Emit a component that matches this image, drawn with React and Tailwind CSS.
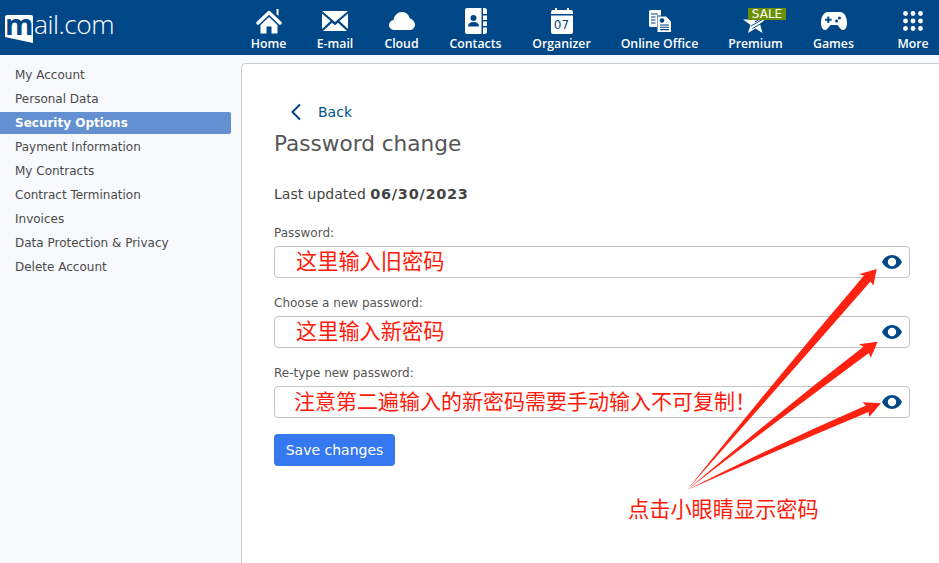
const BLUE = '#004788';

const HomeIcon = () => (
  <svg width="26" height="26" viewBox="0 0 26 26" fill="none">
    <path d="M2 15 13 4.500 24 15" stroke="#fff" strokeWidth="3.400" strokeLinecap="round" strokeLinejoin="round" />
    <path d="M20.500 1h2v7l-2-2z" fill="#fff" />
    <path fillRule="evenodd" d="M13 9l8.500 8v8.500h-6v-7h-5v7h-6V17z" fill="#fff" />
  </svg>
);

const MailIcon = () => (
  <svg width="26" height="20" viewBox="0 0 26 20">
    <path d="M0 0h26L13 11z" fill="#fff" />
    <path d="M0 2.500 8.500 10 0 18zM26 2.500 17.500 10 26 18z" fill="#fff" />
    <path d="M1 20l9-8.300 3 2.600 3-2.600 9 8.300z" fill="#fff" />
  </svg>
);

const CloudIcon = () => (
  <svg width="26" height="18" viewBox="0 0 26 18">
    <path d="M5.500 18C2.400 18 0 15.800 0 13c0-2.600 2-4.700 4.600-5C5.200 3.400 8.800 0 13 0c3.200 0 6 1.800 7.200 4.700 0 0 .3.900.4 1.700C23.700 7 26 9.700 26 12.700 26 15.800 23.600 18 20.500 18z" fill="#fff" />
  </svg>
);

const ContactsIcon = () => (
  <svg width="22" height="26" viewBox="0 0 22 26">
    <path d="M2 0h14.500v26H2a2 2 0 0 1-2-2V2a2 2 0 0 1 2-2z" fill="#fff" />
    <path d="M18 0h1.500A2.500 2.500 0 0 1 22 2.500V6h-4zM18 7.500h4V12h-4zM18 13.500h4V18h-4zM18 19.500h4v4a2.500 2.500 0 0 1-2.500 2.500H18z" fill="#fff" />
    <circle cx="8.500" cy="10" r="3" fill={BLUE} />
    <path d="M3 18.500c0-3 2-4.500 5.500-4.500s5.500 1.500 5.500 4.500z" fill={BLUE} />
  </svg>
);

const CalendarIcon = () => (
  <svg width="22" height="26" viewBox="0 0 22 26">
    <path d="M2 2h2V0h2v2h10V0h2v2h2a2 2 0 0 1 2 2v2H0V4a2 2 0 0 1 2-2z" fill="#fff" />
    <path d="M0 7.500h22V24a2 2 0 0 1-2 2H2a2 2 0 0 1-2-2z" fill="#fff" />
  </svg>
);

const OfficeIcon = () => (
  <svg width="22" height="22" viewBox="0 0 22 22">
    <path d="M0 1.500A1.500 1.500 0 0 1 1.500 0H12v5.500H8V17H1.500A1.500 1.500 0 0 1 0 15.500z" fill="#fff" />
    <path d="M2 4h7M2 7h4.500M2 10h4.500M2 13h4.500" stroke={BLUE} strokeWidth="1.200" />
    <path d="M8.500 6.500H17l5 5V22H8.500z" fill="#fff" />
    <circle cx="13" cy="10.500" r="2.300" fill={BLUE} />
    <path d="M11 15h9M11 17.300h9M11 19.600h9" stroke={BLUE} strokeWidth="1.100" />
  </svg>
);

const StarIcon = () => (
  <svg width="25" height="17" viewBox="0 0 25 17">
    <path d="M0 2.500h8.500L10 0 25 0 17 7 19.500 16 12.500 11.500 5 16 7.500 8z" fill="#fff" />
    <path d="M8 9 21 1.500M9.500 11.500 19 6M12 5 18 1.500" stroke={BLUE} strokeWidth="1" />
  </svg>
);

const GamesIcon = () => (
  <svg width="26" height="18" viewBox="0 0 26 18">
    <path fillRule="evenodd" d="M7 0h12c4 0 7 4.500 7 11 0 4-1.500 7-4 7-2.500 0-4-3.500-5.500-5h-7C8 14.500 6.500 18 4 18c-2.500 0-4-3-4-7C0 4.500 3 0 7 0zM6.300 4.500v2.300H4v2h2.300v2.300h2V8.800h2.300v-2H8.300V4.500zM18.500 4.500a1.500 1.500 0 1 0 0 3 1.500 1.500 0 0 0 0-3zM15.500 7.500a1.500 1.500 0 1 0 0 3 1.500 1.500 0 0 0 0-3z" fill="#fff" />
  </svg>
);

const MoreIcon = () => (
  <svg width="20" height="20" viewBox="0 0 20 20" fill="#fff">
    {[2.500, 10, 17.500].map((y) =>
      [2.500, 10, 17.500].map((x) => <circle key={`${x}-${y}`} cx={x} cy={y} r="2.400" />)
    )}
  </svg>
);

const EyeIcon = () => (
  <svg width="20" height="14" viewBox="0 0 20 14">
    <path fillRule="evenodd" d="M10 0c4.500 0 8 3 10 7-2 4-5.500 7-10 7S2 11 0 7c2-4 5.500-7 10-7zm0 2.800a4.200 4.200 0 1 0 0 8.400 4.200 4.200 0 0 0 0-8.400z" fill={BLUE} />
  </svg>
);

const navItems = [
  { label: 'Home', icon: <HomeIcon />, className: 'w-[65px]' },
  { label: 'E-mail', icon: <MailIcon />, className: 'w-[68px]' },
  { label: 'Cloud', icon: <CloudIcon />, className: 'w-[65px]' },
  { label: 'Contacts', icon: <ContactsIcon />, className: 'w-[83px]' },
  {
    label: 'Organizer',
    icon: (
      <div className="relative">
        <CalendarIcon />
        <span className="absolute left-0 right-0 top-[10px] text-center text-[12px] leading-[14px] text-[#004788]">07</span>
      </div>
    ),
    className: 'w-[89px]',
  },
  { label: 'Online Office', icon: <OfficeIcon />, className: 'w-[107px]' },
  {
    label: 'Premium',
    icon: (
      <div className="relative pt-[8px]">
        <StarIcon />
        <span className="absolute left-[5px] top-[-1px] h-[12px] w-[38px] bg-[#6a8f00] text-center text-[12px] leading-[12px] text-white">SALE</span>
      </div>
    ),
    className: 'w-[85px]',
  },
  { label: 'Games', icon: <GamesIcon />, className: 'w-[71px]' },
  { label: 'More', icon: <MoreIcon />, className: 'w-[70px] pl-[18px]' },
];

const sideItems = [
  'My Account',
  'Personal Data',
  'Security Options',
  'Payment Information',
  'My Contracts',
  'Contract Termination',
  'Invoices',
  'Data Protection & Privacy',
  'Delete Account',
];

const fields = [
  { label: 'Password:', note: '这里输入旧密码', noteClass: 'pl-[21px] text-[21.200px]' },
  { label: 'Choose a new password:', note: '这里输入新密码', noteClass: 'pl-[21px] text-[21.200px]' },
  { label: 'Re-type new password:', note: '注意第二遍输入的新密码需要手动输入不可复制！', noteClass: 'pl-[19px] text-[21px]' },
];

const cjk = "font-['Noto_Sans_CJK_SC','Noto_Sans',sans-serif]";

export default function App() {
  return (
    <div className="relative flex h-[563px] w-[939px] flex-col overflow-hidden bg-[#f7f9fd] font-['DejaVu_Sans',sans-serif]">
      {/* Header */}
      <header className="flex h-[55px] shrink-0 bg-[#004788] text-white">
        <div className="flex w-[236px] shrink-0 items-start pl-[5px] pt-[15px]">
          <div className="relative h-[28px] w-[28px] shrink-0">
            <svg width="28" height="28" viewBox="0 0 28 28" className="absolute left-0 top-0">
              <path d="M2 0h24a2 2 0 0 1 2 2v26L0 22V2a2 2 0 0 1 2-2z" fill="#fff" />
            </svg>
            <span className="absolute left-0 top-[-8px] w-[28px] text-center font-['Open_Sans',sans-serif] text-[29px] font-bold leading-[33px] text-[#004788]">m</span>
          </div>
          <span className="ml-[1px] mt-[-9px] font-['Open_Sans',sans-serif] text-[26.400px] font-light leading-[36px] tracking-[-0.5px]">ail.com</span>
        </div>
        <nav className="flex shrink-0">
          {navItems.map((item) => (
            <a key={item.label} className={`flex h-[55px] shrink-0 flex-col items-center ${item.className}`}>
              <div className="flex h-[36px] items-center justify-center pt-[6px]">{item.icon}</div>
              <span className="whitespace-nowrap font-['Open_Sans',sans-serif] text-[12.300px] font-semibold leading-[15px]">{item.label}</span>
            </a>
          ))}
        </nav>
      </header>

      <div className="flex min-h-0 flex-1">
        {/* Sidebar */}
        <aside className="w-[241px] shrink-0 pr-[10px] pt-[8px]">
          {sideItems.map((name) =>
            name === 'Security Options' ? (
              <a key={name} className="my-[1px] block h-[22px] rounded-r-[2px] bg-[#6290d0] pl-[15px] text-[12px] font-bold leading-[22px] text-white">
                {name}
              </a>
            ) : (
              <a key={name} className="block h-[24px] pl-[15px] text-[12px] leading-[24px] text-[#4a4a4a]">
                {name}
              </a>
            )
          )}
        </aside>

        {/* Main panel */}
        <main className="mt-[8px] flex-1 rounded-tl-[5px] border-l border-t border-[#c5ccd6] bg-white pl-[32px] pr-[29px] pt-[36px]">
          <a className="flex h-[24px] items-center">
            <svg width="12" height="18" viewBox="0 0 12 18" fill="none" className="ml-[16px]">
              <path d="M10 1.500 2.500 9l7.500 7.500" stroke={BLUE} strokeWidth="2" />
            </svg>
            <span className="ml-[16px] text-[14px] text-[#00558f]">Back</span>
          </a>
          <h1 className="mt-[5px] text-[21.600px] font-normal leading-[30px] text-[#555]">Password change</h1>
          <p className="mt-[25px] text-[14px] leading-[20px] text-[#444]">
            Last updated <strong className="text-[14.500px] font-bold tracking-[0.7px]">06/30/2023</strong>
          </p>
          <div className="mt-[20px]">
            {fields.map((f) => (
              <div key={f.label} className="mb-[8px] h-[62px]">
                <label className="block h-[22px] text-[12px] leading-[18px] text-[#555]">{f.label}</label>
                <div className={`flex h-[32px] items-center justify-between rounded-[4px] border border-[#c4c4c4] pr-[7px] ${f.noteClass}`}>
                  <span className={`${cjk} mb-[4px] whitespace-nowrap leading-[30px] text-[#ff1a0a]`}>{f.note}</span>
                  <EyeIcon />
                </div>
              </div>
            ))}
          </div>
          <button className="h-[32px] w-[121px] rounded-[4px] bg-[#3578ef] text-[14px] text-white">Save changes</button>
        </main>
      </div>

      {/* Arrows drawn over the form */}
      <svg width="939" height="563" viewBox="0 0 939 563" className="pointer-events-none absolute left-0 top-0">
        <path d="M687 490Q775 380 864 275.500L859 274.300 876.700 269 873.300 285.700 870.500 281.500Q780 385 687 490z" fill="#ff2211" />
        <path d="M687 490Q775 415 863.500 346.800L859 344.300 877.700 341.700 870.700 357.700 868.800 353Q778 420 687 490z" fill="#ff2211" />
        <path d="M687 490Q775 445 866 405.500L862.300 402.300 881 403.300 869.300 416.700 868.500 412Q778 450 687 490z" fill="#ff2211" />
      </svg>
      <span className={`${cjk} absolute left-[628px] top-[493px] whitespace-nowrap text-[21.200px] leading-[30px] text-[#ff1a0a]`}>点击小眼睛显示密码</span>
    </div>
  );
}
